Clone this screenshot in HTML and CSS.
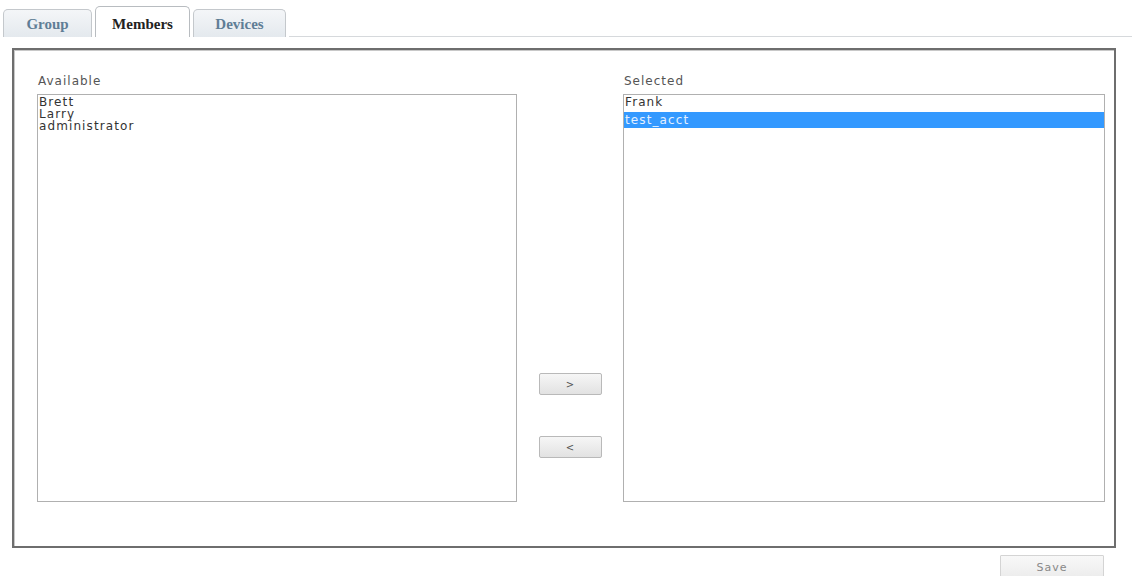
FILE: index.html
```html
<!DOCTYPE html>
<html lang="en">

<head>
    <meta charset="UTF-8">
    <title>Group Members</title>
    <link rel="stylesheet" href="styles.css">
</head>

<body>
    <div class="tabs">
        <div class="tab">Group</div>
        <div class="tab active">Members</div>
        <div class="tab">Devices</div>
        <div class="tab-rest"></div>
    </div>

    <div class="frame">
        <div class="column">
            <div class="label">Available</div>
            <div class="listbox left">
                <div class="option">Brett</div>
                <div class="option">Larry</div>
                <div class="option">administrator</div>
            </div>
        </div>

        <div class="mover">
            <button class="move-btn">&gt;</button>
            <button class="move-btn">&lt;</button>
        </div>

        <div class="column">
            <div class="label">Selected</div>
            <div class="listbox right">
                <div class="option">Frank</div>
                <div class="option selected">test_acct</div>
            </div>
        </div>
    </div>

    <div class="footer">
        <button class="save-btn">Save</button>
    </div>
</body>

</html>
```

FILE: styles.css
```css
body {
    margin: 0;
    padding: 0;
    background-color: #ffffff;
    font-family: "DejaVu Sans", Verdana, sans-serif;
    color: #444;
}

/* tab strip */
.tabs {
    display: flex;
    align-items: flex-end;
    padding: 6px 0 0 3px;
    height: 31px;
}

.tab {
    width: 89px;
    height: 28px;
    margin-right: 3px;
    border: 1px solid #c4c8cc;
    border-bottom: none;
    border-radius: 5px 5px 0 0;
    background: linear-gradient(#f4f6f8, #e4e9ee);
    color: #5f7d96;
    font-family: "Liberation Serif", "Times New Roman", serif;
    font-weight: bold;
    font-size: 15px;
    line-height: 28px;
    text-align: center;
    box-sizing: border-box;
}

.tab.active {
    width: 95px;
    height: 31px;
    background: #ffffff;
    color: #222;
    border-color: #b8bcc0;
    line-height: 34px;
}

.tab:nth-child(3) {
    width: 93px;
}

.tab-rest {
    flex-grow: 1;
    border-bottom: 1px solid #d6d9dc;
}

/* main frame */
.frame {
    display: flex;
    margin: 11px 0 0 12px;
    width: 1104px;
    height: 500px;
    box-sizing: border-box;
    border: 2px solid #6e6e6e;
    box-shadow: inset 1px 1px 0 #c8c8c8;
    padding: 22px 9px 0 23px;
}

.column {
    display: flex;
    flex-direction: column;
}

.label {
    font-size: 12px;
    letter-spacing: 1px;
    color: #555;
    height: 22px;
    line-height: 18px;
    padding-left: 1px;
}

.listbox {
    height: 408px;
    box-sizing: border-box;
    border: 1px solid #b0b0b0;
    padding: 1px 0;
    font-size: 12px;
    letter-spacing: 1.1px;
    color: #333;
}

.listbox.left {
    width: 480px;
}

.listbox.right {
    width: 482px;
}

.option {
    line-height: 12px;
    padding-left: 1px;
}

.option.selected {
    background-color: #3399ff;
    color: #e4f0ff;
    line-height: 14px;
    padding: 1px 0 1px 1px;
    margin-top: 4px;
}

/* move buttons */
.mover {
    width: 106px;
    display: flex;
    flex-direction: column;
    align-items: center;
    padding-top: 301px;
    gap: 41px;
}

.move-btn {
    width: 63px;
    height: 22px;
    border: 1px solid #b9b9b9;
    border-radius: 2px;
    background: linear-gradient(#f6f6f6, #e2e2e2);
    color: #555;
    font-family: "DejaVu Sans", Verdana, sans-serif;
    font-size: 10px;
    padding: 0;
}

/* save */
.footer {
    display: flex;
    justify-content: flex-end;
    width: 1104px;
    padding-top: 7px;
}

.save-btn {
    width: 104px;
    height: 24px;
    border: 1px solid #d4d4d4;
    border-radius: 1px;
    background: linear-gradient(#f8f8f8, #ececec);
    color: #888;
    font-family: "DejaVu Sans", Verdana, sans-serif;
    font-size: 11px;
    letter-spacing: 1px;
    padding: 0;
}
```
